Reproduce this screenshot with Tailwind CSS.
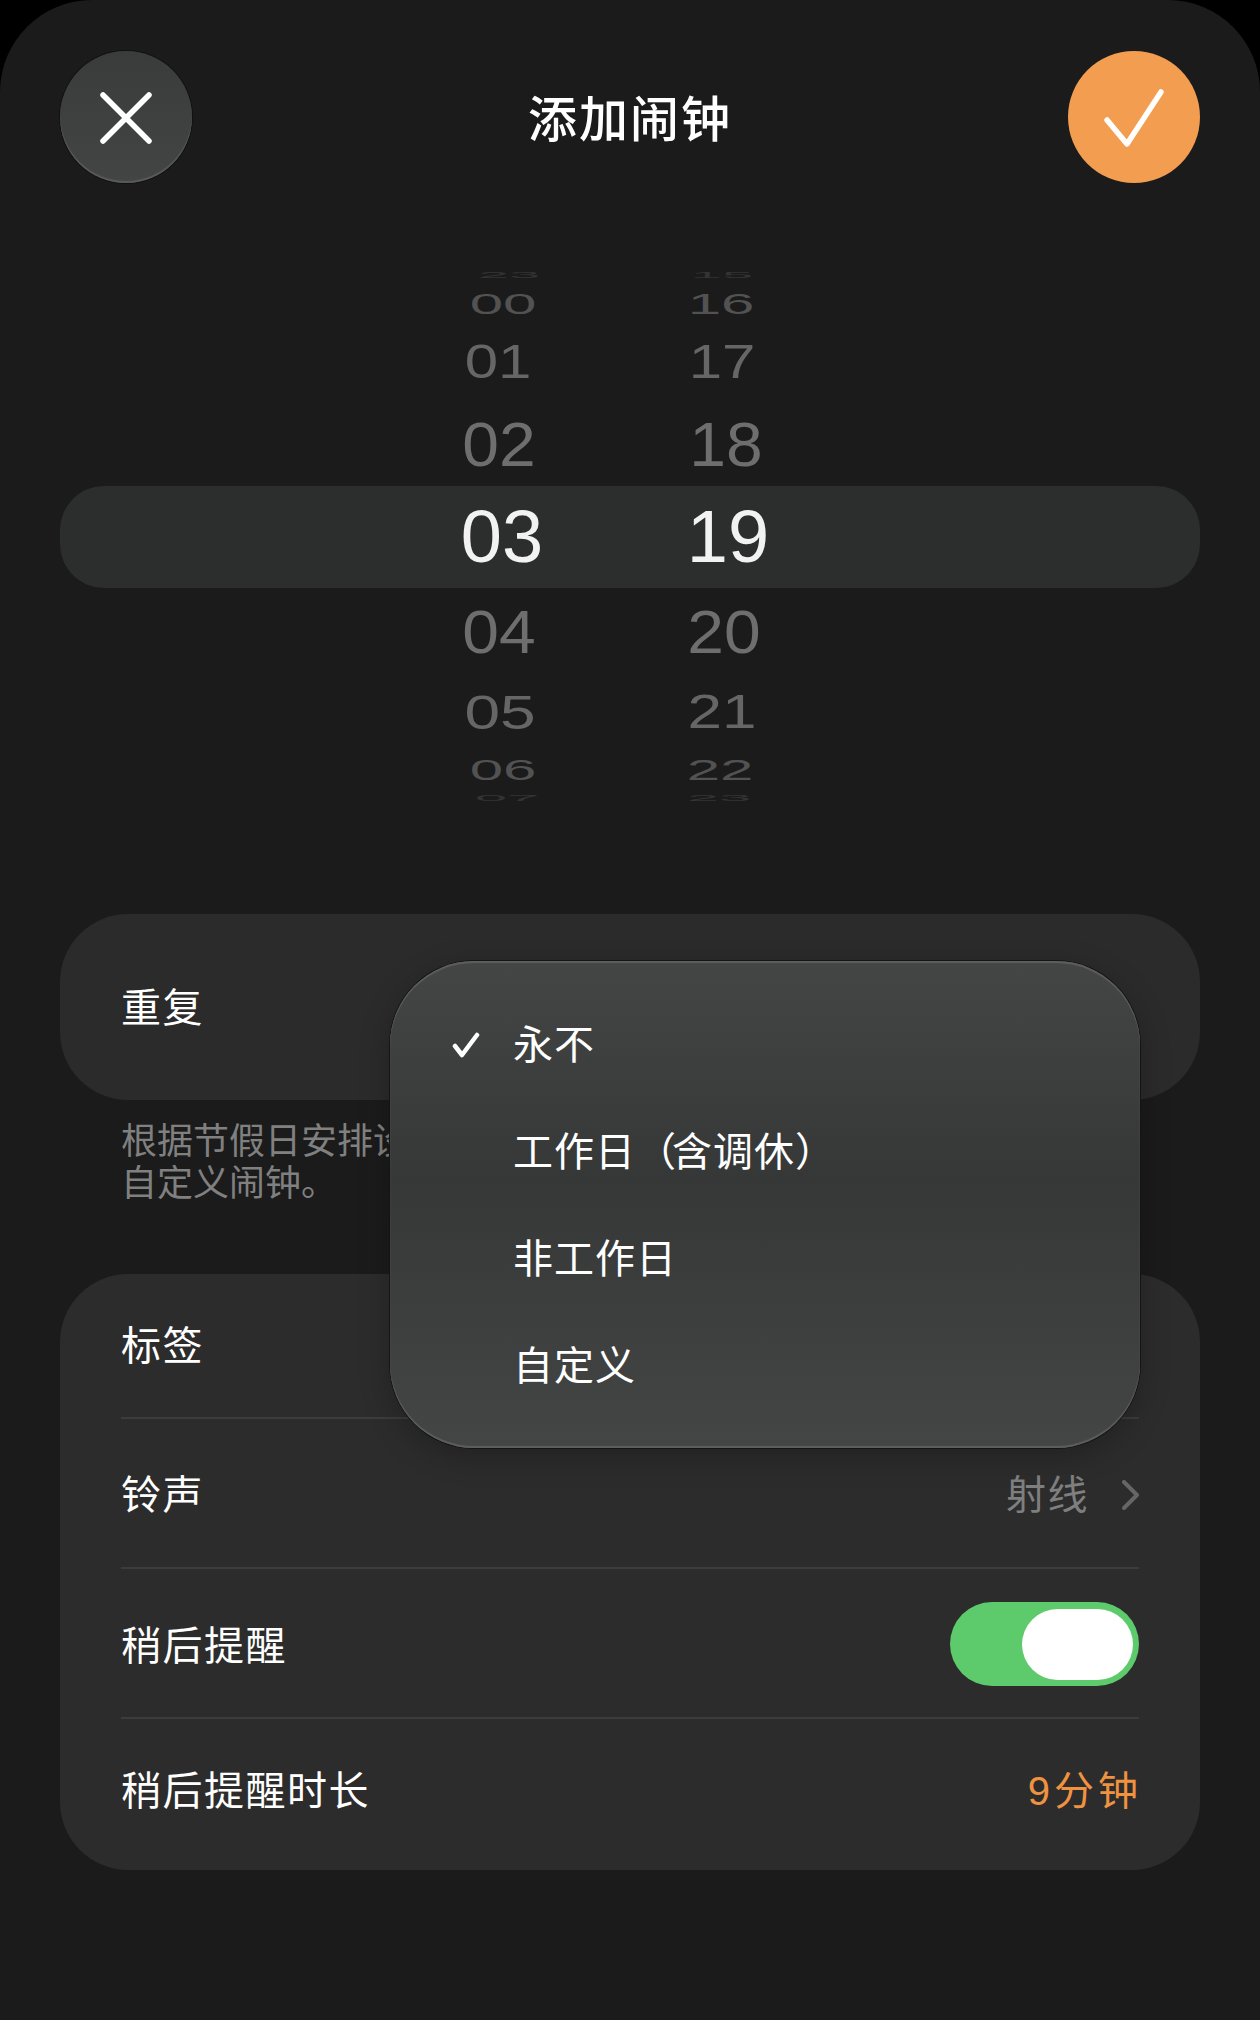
<!DOCTYPE html>
<html lang="zh-CN">
<head>
    <meta charset="UTF-8">
    <meta name="viewport" content="width=device-width, initial-scale=1.0">
    <title>添加闹钟</title>
    <script src="https://cdn.jsdelivr.net/npm/@tailwindcss/browser@4"></script>
</head>
<body class="bg-black font-['Liberation_Sans','Noto_Sans_CJK_SC',sans-serif]">
    <div class="w-[1260px] h-[2020px] bg-[#1b1b1b] rounded-t-[92px] overflow-hidden px-[60px] pt-[51px] text-white">

        <!-- header -->
        <div class="flex items-center justify-between">
            <button class="w-[132px] h-[132px] rounded-full bg-gradient-to-b from-[#3a3c3c] to-[#434545] shadow-[0_0_0_1px_#111,inset_0_-2px_1px_#5a5a5a] flex items-center justify-center">
                <svg class="w-[52px] h-[52px] mt-[1px]" viewBox="0 0 52 52" fill="none" stroke="#fff" stroke-width="5.5" stroke-linecap="round"><path d="M3 3 L49 49 M49 3 L3 49"/></svg>
            </button>
            <div class="text-[49px] leading-[60px] pt-[5px] font-medium tracking-[2px]">添加闹钟</div>
            <button class="w-[132px] h-[132px] rounded-full bg-[#f39d50] flex items-center justify-center">
                <svg class="w-[60px] h-[58px] mt-[2px]" viewBox="0 0 60 58" fill="none" stroke="#fff" stroke-width="5.5" stroke-linecap="round" stroke-linejoin="round"><path d="M3 31 L23 55 L57 3"/></svg>
            </button>
        </div>

        <!-- time wheel -->
        <div class="relative mt-[88px] h-[534px] overflow-hidden">
            <div class="absolute inset-x-0 top-[215px] h-[102px] rounded-[44px] bg-[#2c2e2e]"></div>
            <div class="relative flex pl-[364px] gap-[75px]">
                <div class="w-[150px] flex flex-col items-center">
                    <div class="h-0 leading-[0] mt-[4px] text-[56px] text-[#333333] scale-y-[0.15] translate-x-[10px]">23</div>
                    <div class="h-0 leading-[0] mt-[29px] text-[60px] text-[#525252] scale-y-[0.48] translate-x-[4px]">00</div>
                    <div class="h-0 leading-[0] mt-[58px] text-[60px] text-[#666666] scale-y-[0.79] -translate-x-[1px]">01</div>
                    <div class="h-0 leading-[0] mt-[82px] text-[66px] text-[#6e6e6e] scale-y-[0.94]">02</div>
                    <div class="h-0 leading-[0] mt-[93px] text-[74px] text-[#f2f2f2] translate-x-[3px]">03</div>
                    <div class="h-0 leading-[0] mt-[95px] text-[66px] text-[#6e6e6e] scale-y-[0.92]">04</div>
                    <div class="h-0 leading-[0] mt-[80px] text-[64px] text-[#666666] scale-y-[0.75] translate-x-[1px]">05</div>
                    <div class="h-0 leading-[0] mt-[58px] text-[60px] text-[#525252] scale-y-[0.48] translate-x-[4px]">06</div>
                    <div class="h-0 leading-[0] mt-[28px] text-[58px] text-[#333333] scale-y-[0.17] translate-x-[8px]">07</div>
                </div>
                <div class="w-[150px] flex flex-col items-center">
                    <div class="h-0 leading-[0] mt-[4px] text-[56px] text-[#333333] scale-y-[0.15] -translate-x-[2px]">15</div>
                    <div class="h-0 leading-[0] mt-[29px] text-[60px] text-[#525252] scale-y-[0.48] -translate-x-[3px]">16</div>
                    <div class="h-0 leading-[0] mt-[58px] text-[60px] text-[#666666] scale-y-[0.79] -translate-x-[2px]">17</div>
                    <div class="h-0 leading-[0] mt-[82px] text-[66px] text-[#6e6e6e] scale-y-[0.94] translate-x-[2px]">18</div>
                    <div class="h-0 leading-[0] mt-[93px] text-[74px] text-[#f2f2f2] translate-x-[4px]">19</div>
                    <div class="h-0 leading-[0] mt-[95px] text-[66px] text-[#6e6e6e] scale-y-[0.92]">20</div>
                    <div class="h-0 leading-[0] mt-[80px] text-[62px] text-[#666666] scale-y-[0.77] -translate-x-[2px]">21</div>
                    <div class="h-0 leading-[0] mt-[58px] text-[60px] text-[#525252] scale-y-[0.48] -translate-x-[4px]">22</div>
                    <div class="h-0 leading-[0] mt-[28px] text-[58px] text-[#333333] scale-y-[0.17] -translate-x-[5px]">23</div>
                </div>
            </div>
        </div>

        <!-- settings -->
        <div class="relative mt-[109px]">
            <div class="h-[186px] rounded-[68px] bg-[#2b2b2b] px-[61px] pt-[1px] flex items-center text-[40px] tracking-[1.5px]">重复</div>
            <p class="mt-[21px] px-[61px] text-[36px] leading-[42px] text-[#808080]">根据节假日安排设置工作日闹钟，也可以<br>自定义闹钟。</p>

            <div class="mt-[69px] rounded-[68px] bg-[#2c2c2c] px-[61px] text-[40px] tracking-[1.5px]">
                <div class="h-[145px] pt-[1px] flex items-center border-b-2 border-[#3c3c3c]">标签</div>
                <div class="h-[150px] pt-[4px] flex items-center justify-between border-b-2 border-[#3c3c3c]">
                    <span>铃声</span>
                    <span class="flex items-center gap-[33px] text-[#7f7f7f]">射线
                        <svg class="w-[17px] h-[30px]" viewBox="0 0 17 30" fill="none" stroke="#666666" stroke-width="4" stroke-linecap="round" stroke-linejoin="round"><path d="M2 2 L15 15 L2 28"/></svg>
                    </span>
                </div>
                <div class="h-[150px] pt-[2px] flex items-center justify-between border-b-2 border-[#3c3c3c]">
                    <span class="pt-[3px]">稍后提醒</span>
                    <div class="w-[189px] h-[84px] rounded-full bg-[#5dcb6c] flex items-center justify-end pr-[6px]">
                        <div class="w-[111px] h-[71px] rounded-full bg-white"></div>
                    </div>
                </div>
                <div class="h-[151px] pb-[7px] flex items-center justify-between">
                    <span>稍后提醒时长</span>
                    <span class="text-[#ef9340] tracking-[4px] -mr-[3px]">9分钟</span>
                </div>
            </div>

            <!-- repeat menu -->
            <div class="absolute left-[330px] top-[47px] w-[750px] h-[487px] rounded-[84px] bg-gradient-to-b from-[#444646] via-[#363837] via-45% to-[#444646] shadow-[0_0_0_1px_#141414,0_8px_30px_rgba(0,0,0,0.25),inset_0_2px_1px_#5e5e5e,inset_0_-2px_1px_#5e5e5e] pt-[30px] text-[40px] tracking-[1px]">
                <div class="relative h-[107px] flex items-center pl-[123px]">
                    <svg class="absolute left-[62px] top-[41px] w-[28px] h-[26px]" viewBox="0 0 28 26" fill="none" stroke="#fff" stroke-width="4.5" stroke-linecap="round" stroke-linejoin="round"><path d="M3 14 L10 23 L25 3"/></svg>
                    永不
                </div>
                <div class="h-[107px] flex items-center pl-[123px]">工作日<span class="tracking-[-4px]">（</span>含调休）</div>
                <div class="h-[107px] flex items-center pl-[123px]">非工作日</div>
                <div class="h-[107px] flex items-center pl-[123px]">自定义</div>
            </div>
        </div>
    </div>
</body>
</html>
